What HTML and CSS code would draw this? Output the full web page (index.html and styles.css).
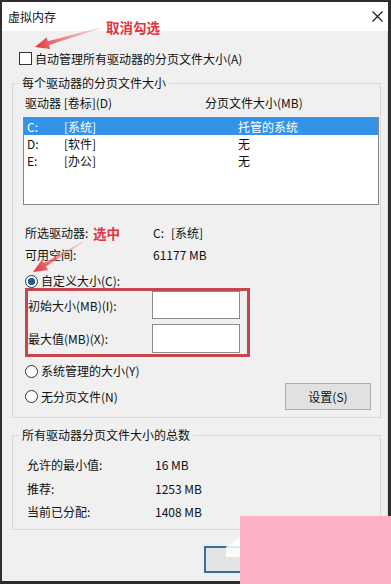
FILE: index.html
```html
<!DOCTYPE html>
<html lang="zh-CN">
<head>
<meta charset="utf-8">
<title>虚拟内存</title>
<link rel="stylesheet" href="styles.css">
</head>
<body>
<div class="window">
  <div class="titlebar">
    <span class="title">虚拟内存</span>
    <svg class="close" width="11" height="11" viewBox="0 0 11 11"><path d="M0.5 0.5L10.5 10.5M10.5 0.5L0.5 10.5" stroke="#1a1a1a" stroke-width="1.1" fill="none"/></svg>
  </div>
  <div class="content">
    <div class="auto"><span class="checkbox"></span><span>自动管理所有驱动器的分页文件大小(A)</span></div>

    <fieldset class="group g1">
      <legend>每个驱动器的分页文件大小</legend>
      <div class="list-head"><span>驱动器 [卷标](D)</span><span>分页文件大小(MB)</span></div>
      <div class="listbox">
        <div class="lrow sel"><span>C:</span><span>[系统]</span><span>托管的系统</span></div>
        <div class="lrow"><span>D:</span><span>[软件]</span><span>无</span></div>
        <div class="lrow"><span>E:</span><span>[办公]</span><span>无</span></div>
      </div>
      <div class="info i1"><span>所选驱动器:</span><span><span class="drv">C:</span>[系统]</span></div>
      <div class="info i2"><span>可用空间:</span><span>61177 MB</span></div>
      <div class="radio r1"><span class="dot on"></span><span>自定义大小(C):</span></div>
      <div class="custom">
        <div class="crow c1"><span>初始大小(MB)(I):</span><span class="input"></span></div>
        <div class="crow c2"><span>最大值(MB)(X):</span><span class="input"></span></div>
      </div>
      <div class="radio r2"><span class="dot"></span><span>系统管理的大小(Y)</span></div>
      <div class="radio-row">
        <div class="radio"><span class="dot"></span><span>无分页文件(N)</span></div>
        <div class="btn">设置(S)</div>
      </div>
    </fieldset>

    <fieldset class="group g2">
      <legend>所有驱动器分页文件大小的总数</legend>
      <div class="totals">
        <span>允许的最小值:</span><span>16 MB</span>
        <span>推荐:</span><span>1253 MB</span>
        <span>当前已分配:</span><span>1408 MB</span>
      </div>
    </fieldset>

    <div class="footer"><div class="okbtn"></div></div>
  </div>
</div>

<svg class="marks" width="391" height="584" viewBox="0 0 391 584">
  <defs>
    <linearGradient id="ga" gradientUnits="userSpaceOnUse" x1="100" y1="28" x2="35" y2="47">
      <stop offset="0" stop-color="#f4a0a0" stop-opacity="0.4"/>
      <stop offset="1" stop-color="#e2323a"/>
    </linearGradient>
    <linearGradient id="gb" gradientUnits="userSpaceOnUse" x1="83" y1="242" x2="33" y2="272">
      <stop offset="0" stop-color="#f4a0a0" stop-opacity="0.4"/>
      <stop offset="1" stop-color="#e2323a"/>
    </linearGradient>
  </defs>
  <polygon points="35,47 46.7,37.3 47.8,41.2 99.9,27.5 100.1,28.5 49,45 50.1,48.9" fill="url(#ga)"/>
  <polygon points="33,272 41.9,259.7 44,263.1 82.7,241.6 83.3,242.4 46,266.5 48.1,269.9" fill="url(#gb)"/>
  <polygon points="226,547 240,537 240,557 226,557" fill="#ffffff" opacity="0.85"/>
</svg>
<div class="note n1">取消勾选</div>
<div class="note n2">选中</div>
<div class="pink"></div>
</body>
</html>
```

FILE: styles.css
```css
* { box-sizing: border-box; }
html, body { margin: 0; padding: 0; }
body {
  width: 391px;
  height: 584px;
  overflow: hidden;
  background: #2e2e2e;
  font-family: "Noto Sans CJK SC", "Microsoft YaHei", sans-serif;
  font-size: 12px;
  color: #111;
}
.window {
  width: 391px;
  height: 584px;
  border-style: solid;
  border-color: #2e2e2e;
  border-width: 2px 3px 3px 2px;
  background: #f0f0f0;
  display: flex;
  flex-direction: column;
}
.titlebar {
  flex: none;
  height: 29px;
  background: #fff;
  display: flex;
  align-items: center;
  justify-content: space-between;
  padding: 0 5px 0 6px;
}
.title { line-height: 14px; }
.close { display: block; }
.content {
  flex: 1;
  display: flex;
  flex-direction: column;
  border-right: 1px solid #dcdcdc;
}
.auto {
  display: flex;
  align-items: center;
  gap: 3px;
  height: 13px;
  line-height: 13px;
  margin: 21px 0 0 17px;
}
.checkbox {
  width: 13px;
  height: 13px;
  border: 1px solid #333;
  background: #fff;
  flex: none;
}
.group {
  margin: 11px 6px 0 10px;
  padding: 0 0 7px 0;
  border: 1px solid #d9d9d9;
  min-width: 0;
}
.group legend {
  margin-left: 6px;
  padding: 0 3px;
  line-height: 14px;
  font-size: 12px;
}
.g2 { margin-top: 10px; padding-bottom: 9px; }
.list-head {
  display: grid;
  grid-template-columns: 180px auto;
  margin: 5px 0 0 12px;
  line-height: 16px;
}
.listbox {
  margin: 6px 1px 0 10px;
  height: 88px;
  border: 1px solid #828790;
  background: #fff;
}
.lrow {
  display: grid;
  grid-template-columns: 37px 174px auto;
  padding-left: 3px;
  height: 17px;
  line-height: 17px;
}
.lrow.sel { background: #3592e9; color: #fff; }
.info {
  display: grid;
  grid-template-columns: 128px auto;
  margin-left: 12px;
  line-height: 16px;
}
.i1 { margin-top: 20px; }
.i2 { margin-top: 6px; }
.drv { margin-right: 7px; }
.radio {
  display: flex;
  align-items: center;
  gap: 3px;
  line-height: 14px;
  margin-left: 12px;
}
.r1 { margin-top: 11px; }
.r2 { margin-top: 7px; }
.dot {
  width: 13px;
  height: 13px;
  flex: none;
  border: 1px solid #333;
  border-radius: 50%;
  background: #fff;
}
.dot.on {
  background: radial-gradient(circle, #1d5f94 0 3.4px, #fff 4px);
}
.custom {
  margin-left: 12px;
  width: 225px;
  border: 3px solid #c4474f;
  padding: 0 7px 1px 0;
  display: flex;
  flex-direction: column;
  gap: 5px;
}
.crow {
  display: flex;
  justify-content: space-between;
  align-items: center;
}
.c1 { height: 28px; }
.c2 { height: 29px; }
.input {
  width: 88px;
  height: 100%;
  background: #fff;
  border: 1px solid #8a8a8a;
}
.radio-row {
  display: flex;
  justify-content: space-between;
  align-items: center;
  margin: 5px 9px 0 0;
  height: 27px;
}
.btn {
  width: 86px;
  height: 27px;
  border: 1px solid #adadad;
  background: #e1e1e1;
  display: flex;
  align-items: center;
  justify-content: center;
}
.totals {
  display: grid;
  grid-template-columns: 128px auto;
  row-gap: 7.5px;
  padding: 15px 0 0 14px;
  line-height: 16px;
}
.footer { margin-top: 16px; padding-left: 202px; }
.okbtn {
  width: 75px;
  height: 27px;
  border: 2px solid #3c6e94;
  background: #e4e4e4;
}
.marks { position: absolute; left: 0; top: 0; pointer-events: none; }
.note {
  position: absolute;
  color: #e2323a;
  font-weight: bold;
  font-size: 13.5px;
  line-height: 16px;
}
.n1 { left: 106px; top: 19px; }
.n2 { left: 93px; top: 225px; }
.pink {
  position: absolute;
  left: 240px;
  top: 516px;
  width: 151px;
  height: 68px;
  background: #fdb1c6;
}
```
